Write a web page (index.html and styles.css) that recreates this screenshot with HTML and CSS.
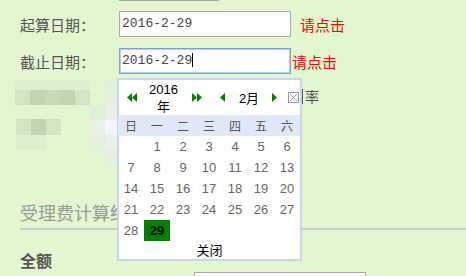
FILE: index.html
```html
<!DOCTYPE html>
<html lang="zh-CN">
<head>
    <meta charset="UTF-8">
    <title>受理费计算</title>
    <link rel="stylesheet" href="styles.css">
</head>
<body>
    <div class="page">
        <div class="prev-field"></div>

        <div class="form-row first">
            <span class="label">起算日期：</span>
            <div class="field">2016-2-29</div>
            <span class="hint">请点击</span>
        </div>

        <div class="form-row">
            <span class="label">截止日期：</span>
            <div class="field focused">2016-2-29<span class="caret"></span></div>
            <span class="hint tight">请点击</span>
        </div>

        <!-- masked rows behind the date picker -->
        <div class="blur-area">
            <div class="blur-labels">
                <div class="mosaic m-one">
                    <i class="t1"></i><i class="t1"></i><i class="t1"></i><i class="t1"></i><i class="t1"></i>
                    <i class="t2"></i><i class="t4"></i><i class="t3"></i><i class="t4"></i><i class="t2"></i>
                </div>
                <div class="mosaic m-two">
                    <i class="t2"></i><i class="t4"></i><i class="t2"></i>
                    <i class="t1"></i><i class="t1"></i><i class="t0"></i>
                </div>
            </div>
            <div class="mosaic m-field">
                <i class="t0"></i><i class="p1"></i>
                <i class="t0"></i><i class="p2"></i>
                <i class="p1"></i><i class="p3"></i>
                <i class="p3"></i><i class="p4"></i>
                <i class="p2"></i><i class="p3"></i>
                <i class="t0"></i><i class="p2"></i>
            </div>
            <span class="rate">率</span>
        </div>

        <h3 class="section-title">受理费计算结果</h3>
        <div class="sub-title">全额</div>
        <div class="field amount"></div>

        <div class="calendar">
            <div class="cal-head">
                <svg class="nav dbl first-nav" width="10" height="9" viewBox="0 0 10 9"><polygon points="5,0 0,4.5 5,9"/><polygon points="10,0 5,4.5 10,9"/></svg>
                <span class="year">2016年</span>
                <svg class="nav dbl next-year" width="10" height="9" viewBox="0 0 10 9"><polygon points="0,0 5,4.5 0,9"/><polygon points="5,0 10,4.5 5,9"/></svg>
                <svg class="nav single prev-month" width="5" height="9" viewBox="0 0 5 9"><polygon points="5,0 0,4.5 5,9"/></svg>
                <span class="month">2月</span>
                <svg class="nav single next-month" width="5" height="9" viewBox="0 0 5 9"><polygon points="0,0 5,4.5 0,9"/></svg>
                <svg class="close-box" width="11" height="11" viewBox="0 0 11 11"><rect x="0.5" y="0.5" width="10" height="10"/><path d="M2 2 L9 9 M9 2 L2 9"/></svg>
            </div>
            <div class="cal-week">
                <span>日</span><span>一</span><span>二</span><span>三</span><span>四</span><span>五</span><span>六</span>
            </div>
            <div class="cal-days">
                <span></span><span>1</span><span>2</span><span>3</span><span>4</span><span>5</span><span>6</span>
                <span>7</span><span>8</span><span>9</span><span>10</span><span>11</span><span>12</span><span>13</span>
                <span>14</span><span>15</span><span>16</span><span>17</span><span>18</span><span>19</span><span>20</span>
                <span>21</span><span>22</span><span>23</span><span>24</span><span>25</span><span>26</span><span>27</span>
                <span>28</span><span class="selected">29</span>
            </div>
            <div class="cal-foot">关闭</div>
        </div>
    </div>
</body>
</html>
```

FILE: styles.css
```css
* {
    margin: 0;
    padding: 0;
    box-sizing: border-box;
}

body {
    font-family: "Noto Sans CJK SC", "Liberation Sans", sans-serif;
    background-color: #e4f6cf;
    color: #555;
    overflow: hidden;
}

.page {
    position: relative;
    height: 276px;
    overflow: hidden;
}

.prev-field {
    margin-left: 119px;
    width: 100px;
    height: 1px;
    background-color: #aaa;
}

.form-row {
    display: flex;
    align-items: center;
    padding-left: 20px;
    height: 26px;
    margin-top: 11px;
}

.form-row.first {
    margin-top: 10px;
}

.label {
    width: 99px;
    font-size: 15px;
    color: #555;
}

.field {
    width: 172px;
    height: 26px;
    border: 1px solid #aaa;
    background-color: #fff;
    font-family: "Liberation Mono", monospace;
    font-size: 13px;
    line-height: 24px;
    padding-left: 2px;
    color: #444;
}

.field.focused {
    border-color: #7d9fdb;
    box-shadow: 0 0 0 1px #b9cdf0 inset;
}

.caret {
    display: inline-block;
    width: 1px;
    height: 14px;
    background-color: #000;
    vertical-align: -3px;
}

.hint {
    margin-left: 9px;
    font-size: 15px;
    color: #f00;
}

.hint.tight {
    margin-left: 1px;
}

.blur-area {
    display: flex;
    margin-top: 6px;
    padding-left: 15px;
    height: 85px;
}

.blur-labels {
    width: 75px;
}

.mosaic {
    display: grid;
}

.mosaic i {
    display: block;
}

.m-one {
    grid-template-columns: repeat(5, 15px);
    grid-template-rows: 10px 15px;
}

.m-two {
    margin-top: 14px;
    margin-left: 1px;
    grid-template-columns: repeat(3, 15px);
    grid-template-rows: 16px 15px;
}

.m-field {
    grid-template-columns: 15px 12px;
    grid-template-rows: 10px 15px 15px 15px 15px 15px;
}

.t0 { background-color: #e4f6cf; }
.t1 { background-color: #dfeecd; }
.t2 { background-color: #d5e2c3; }
.t3 { background-color: #cbd8b8; }
.t4 { background-color: #c6d3b2; }
.p1 { background-color: #e1f1d3; }
.p2 { background-color: #e6efdd; }
.p3 { background-color: #eaf1e5; }
.p4 { background-color: #f4f5fb; }

.rate {
    margin-left: 185px;
    margin-top: 9px;
    height: 15px;
    padding-left: 2px;
    border-left: 1px solid #555;
    font-size: 14px;
    line-height: 15px;
    color: #555;
}

.section-title {
    margin: 35px 0 0 20px;
    padding-bottom: 4px;
    border-bottom: 2px solid #ccc;
    font-size: 18px;
    font-weight: normal;
    line-height: 24px;
    color: #999;
    white-space: nowrap;
}

.sub-title {
    margin: 20px 0 0 20px;
    font-size: 16px;
    font-weight: bold;
    line-height: 20px;
    color: #555;
}

.field.amount {
    margin: 2px 0 0 194px;
}

/* date picker popup */
.calendar {
    position: absolute;
    left: 117px;
    top: 78px;
    width: 185px;
    border: 2px solid #c6d6f2;
    background-color: #fff;
    font-family: "Liberation Sans", "Noto Sans CJK SC", sans-serif;
}

.cal-head {
    display: flex;
    align-items: center;
    height: 35px;
    color: #000;
    font-size: 13px;
}

.nav {
    fill: #008000;
    flex-shrink: 0;
}

.first-nav {
    margin-left: 8px;
}

.year {
    width: 35px;
    margin-left: 9px;
    line-height: 17px;
    text-align: center;
}

.next-year {
    margin-left: 11px;
}

.prev-month {
    margin-left: 18px;
}

.month {
    width: 22px;
    margin-left: 13px;
    text-align: center;
    white-space: nowrap;
}

.next-month {
    margin-left: 12px;
}

.close-box {
    margin-left: 11px;
    fill: none;
    stroke: #999;
    stroke-width: 1;
}

.cal-week,
.cal-days {
    display: grid;
    grid-template-columns: repeat(7, 1fr);
    margin-left: -1px;
}

.cal-week {
    background-color: #dfe8f6;
    height: 21px;
    line-height: 21px;
    font-family: "Noto Sans CJK SC", sans-serif;
    font-size: 12px;
    color: #555;
    text-align: center;
}

.cal-days {
    grid-auto-rows: 21px;
    font-size: 13px;
    line-height: 21px;
    color: #666;
    text-align: center;
}

.cal-days .selected {
    background-color: #008000;
    color: #000;
    font-weight: bold;
}

.cal-foot {
    height: 18px;
    line-height: 18px;
    text-align: center;
    font-family: "Noto Sans CJK SC", sans-serif;
    font-size: 13px;
    color: #000;
}
```
